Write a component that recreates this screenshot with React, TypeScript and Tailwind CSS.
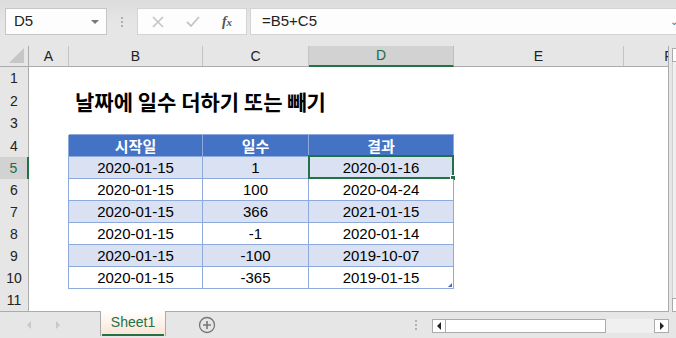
import React from 'react';

const font = { fontFamily: '"Liberation Sans", "Noto Sans CJK KR", sans-serif' };

const rows = [
  { start: '2020-01-15', days: '1', result: '2020-01-16' },
  { start: '2020-01-15', days: '100', result: '2020-04-24' },
  { start: '2020-01-15', days: '366', result: '2021-01-15' },
  { start: '2020-01-15', days: '-1', result: '2020-01-14' },
  { start: '2020-01-15', days: '-100', result: '2019-10-07' },
  { start: '2020-01-15', days: '-365', result: '2019-01-15' },
];

function Dots() {
  return (
    <div className="flex flex-col gap-[2px]">
      <span className="w-[2px] h-[2px] bg-[#b0b0b0]" />
      <span className="w-[2px] h-[2px] bg-[#b0b0b0]" />
      <span className="w-[2px] h-[2px] bg-[#b0b0b0]" />
    </div>
  );
}

function FormulaBar() {
  return (
    <div className="h-[46px] flex items-start pt-[8px] bg-gradient-to-b from-[#dcdcdc] via-[#e6e6e6] to-[#e6e6e6]">
      <div className="ml-[5px] w-[102px] h-[27px] bg-[#fdfdfd] border border-[#c6c6c6] flex items-center pl-[8px] pr-[7px]">
        <span className="text-[15px] text-[#222] flex-1">D5</span>
        <span className="w-0 h-0 border-l-[4px] border-r-[4px] border-t-[4px] border-l-transparent border-r-transparent border-t-[#777]" />
      </div>
      <div className="w-[30px] h-[27px] flex items-center justify-center">
        <Dots />
      </div>
      <div className="w-[110px] h-[27px] bg-[#fdfdfd] border border-[#d4d4d4] flex items-center">
        <div className="w-[40px] flex justify-center">
          <svg width="12" height="12" viewBox="0 0 12 12">
            <path d="M1 1L11 11M11 1L1 11" stroke="#c4c4c4" strokeWidth="1.6" />
          </svg>
        </div>
        <div className="w-[30px] flex justify-center">
          <svg width="14" height="12" viewBox="0 0 14 12">
            <path d="M1 6L5 10L13 1" stroke="#c4c4c4" strokeWidth="1.8" fill="none" />
          </svg>
        </div>
        <div className="flex-1 flex justify-center">
          <span className="text-[14px] italic font-bold text-[#555]" style={{ fontFamily: '"Liberation Serif", serif' }}>
            f<span className="text-[11px]">x</span>
          </span>
        </div>
      </div>
      <div className="ml-[3px] flex-1 h-[27px] bg-[#fdfdfd] border-y border-l border-[#d4d4d4] flex items-center pl-[11px]">
        <span className="text-[15px] text-[#222] flex-1">=B5+C5</span>
        <span className="text-[10px] text-[#666] -mr-[2px]">⌄</span>
      </div>
    </div>
  );
}

const cols = [
  { l: 'A', w: 'w-[40px]' },
  { l: 'B', w: 'w-[134px]' },
  { l: 'C', w: 'w-[106px]' },
  { l: 'D', w: 'w-[145px]' },
  { l: 'E', w: 'w-[170px]' },
  { l: 'F', w: 'w-[90px]' },
];

function ColumnHeader() {
  return (
    <div className="flex h-[21px] shrink-0 bg-[#e6e6e6] border-b border-[#ababab]">
      <div className="w-[29px] shrink-0 border-r border-[#ababab] flex items-end justify-end pr-[4px] pb-[3px]">
        <svg width="15" height="15" viewBox="0 0 15 15">
          <path d="M15 0L15 15L0 15Z" fill="#c6c6c6" />
        </svg>
      </div>
      {cols.map((c) =>
        c.l === 'D' ? (
          <div key={c.l} className={`${c.w} shrink-0 bg-[#d2d2d2] border-r border-[#bdbdbd] border-b-2 border-b-[#217346] -mb-px flex items-center justify-center text-[14px] text-[#1e6b41]`}>
            {c.l}
          </div>
        ) : (
          <div key={c.l} className={`${c.w} shrink-0 border-r border-[#c4c4c4] flex items-center justify-center text-[14px] text-[#222]`}>
            {c.l}
          </div>
        )
      )}
    </div>
  );
}

function RowHead({ n, active }: { n: number; active?: boolean }) {
  return active ? (
    <div className="w-[29px] shrink-0 bg-[#d2d2d2] border-r-2 border-[#217346] flex items-center justify-center text-[14px] text-[#1e6b41]">
      {n}
    </div>
  ) : (
    <div className="w-[29px] shrink-0 bg-[#e6e6e6] border-r border-[#ababab] flex items-center justify-center text-[14px] text-[#222]">
      {n}
    </div>
  );
}

function Grid() {
  const tb = 'border-[#8ea9db]';
  return (
    <div className="flex-1 flex flex-col overflow-hidden border-r border-b border-[#ababab] bg-white">
      <ColumnHeader />
      {/* row 1 */}
      <div className="flex h-[23px]">
        <RowHead n={1} />
        <div className="flex-1" />
      </div>
      {/* row 2 */}
      <div className="flex h-[23px]">
        <RowHead n={2} />
        <div className="w-[40px] shrink-0" />
        <div className="flex-1 flex items-center pl-[6px] whitespace-nowrap">
          <span className="text-[21px] font-bold text-black leading-none" style={{ fontFamily: '"Noto Sans CJK KR", sans-serif' }}>
            날짜에 일수 더하기 또는 빼기
          </span>
        </div>
      </div>
      {/* row 3 */}
      <div className="flex h-[23px]">
        <RowHead n={3} />
        <div className="w-[40px] shrink-0" />
        <div className={`w-[134px] shrink-0 border-b ${tb}`} />
        <div className={`w-[106px] shrink-0 border-b ${tb}`} />
        <div className={`w-[145px] shrink-0 border-b ${tb}`} />
        <div className="flex-1" />
      </div>
      {/* row 4 header */}
      <div className="flex h-[22px]">
        <RowHead n={4} />
        <div className={`w-[40px] shrink-0 border-r ${tb}`} />
        {['시작일', '일수', '결과'].map((h, i) => (
          <div
            key={h}
            className={`${['w-[134px]', 'w-[106px]', 'w-[145px]'][i]} shrink-0 bg-[#4472c4] border-r border-b ${tb} flex items-center justify-center text-white text-[15px] font-bold`}
            style={{ fontFamily: '"Noto Sans CJK KR", sans-serif' }}
          >
            {h}
          </div>
        ))}
        <div className="flex-1" />
      </div>
      {rows.map((r, i) => {
        const band = i % 2 === 0 ? 'bg-[#d9e1f2]' : 'bg-white';
        const last = i === rows.length - 1;
        return (
          <div key={i} className="flex h-[22px]">
            <RowHead n={i + 5} active={i === 0} />
            <div className={`w-[40px] shrink-0 border-r ${tb}`} />
            <div className={`w-[134px] shrink-0 ${band} border-r border-b ${tb} flex items-center justify-center text-[15px] text-black`}>
              {r.start}
            </div>
            <div className={`w-[106px] shrink-0 ${band} border-r border-b ${tb} flex items-center justify-center text-[15px] text-black`}>
              {r.days}
            </div>
            <div className={`w-[145px] shrink-0 ${band} border-r border-b ${tb} flex items-center justify-center text-[15px] text-black relative`}>
              {r.result}
              {i === 0 && (
                <div className="absolute -top-[2px] -left-[1px] -right-[1px] -bottom-[1px] border-2 border-[#217346]">
                  <div className="absolute -right-[4px] -bottom-[4px] w-[6px] h-[6px] bg-[#217346] border border-white" />
                </div>
              )}
              {last && (
                <div className="absolute right-[1px] bottom-[1px] w-0 h-0 border-l-[4px] border-b-[4px] border-l-transparent border-b-[#4a6bc4]" />
              )}
            </div>
            <div className="flex-1" />
          </div>
        );
      })}
      {/* row 11 */}
      <div className="flex h-[22px]">
        <RowHead n={11} />
        <div className="flex-1" />
      </div>
      <div className="flex flex-1">
        <div className="w-[29px] shrink-0 bg-[#e6e6e6] border-r border-[#ababab]" />
      </div>
    </div>
  );
}

function VScroll() {
  return (
    <div className="w-[7px] shrink-0 flex flex-col bg-[#e6e6e6] pl-[3px] pt-[2px]">
      <div className="h-[14px] bg-white border-l border-t border-b border-[#ababab]" />
      <div className="flex-1 bg-[#f0f0f0] border-l border-[#d0d0d0]" />
      <div className="h-[14px] bg-white border-l border-t border-b border-[#ababab]" />
    </div>
  );
}

function TabBar() {
  return (
    <div className="h-[26px] flex bg-[#e6e6e6]">
      <div className="w-[100px] shrink-0 flex items-center">
        <span className="ml-[27px] w-0 h-0 border-t-[4px] border-b-[4px] border-r-[4px] border-t-transparent border-b-transparent border-r-[#c8c8c8]" />
        <span className="ml-[25px] w-0 h-0 border-t-[4px] border-b-[4px] border-l-[4px] border-t-transparent border-b-transparent border-l-[#c8c8c8]" />
      </div>
      <div className="w-[66px] shrink-0 -mt-px h-[25px] bg-gradient-to-b from-white to-[#fbe2d3] border-x border-[#ababab] flex flex-col">
        <div className="flex-1 flex items-center justify-center text-[14px] text-[#217346]">Sheet1</div>
        <div className="h-[2px] bg-[#217346] mx-px" />
      </div>
      <div className="w-[83px] shrink-0 flex items-center justify-center">
        <svg width="18" height="18" viewBox="0 0 18 18" className="-ml-[2px]">
          <circle cx="9" cy="9" r="7.5" fill="none" stroke="#777" strokeWidth="1.3" />
          <path d="M9 5V13M5 9H13" stroke="#777" strokeWidth="1.6" />
        </svg>
      </div>
      <div className="w-[183px] shrink-0 flex items-center justify-end pr-[15px]">
        <Dots />
      </div>
      <div className="flex-1 flex pt-[7px] pb-[5px] pr-[7px]">
        <div className="w-[14px] bg-white border border-[#ababab] flex items-center justify-center">
          <span className="w-0 h-0 border-t-[4px] border-b-[4px] border-r-[4px] border-t-transparent border-b-transparent border-r-[#222]" />
        </div>
        <div className="w-[160px] bg-white border-y border-r border-[#ababab]" />
        <div className="flex-1 bg-[#f0f0f0]" />
        <div className="w-[15px] bg-white border border-[#ababab] flex items-center justify-center">
          <span className="w-0 h-0 border-t-[4px] border-b-[4px] border-l-[4px] border-t-transparent border-b-transparent border-l-[#222]" />
        </div>
      </div>
    </div>
  );
}

export default function App() {
  return (
    <div className="w-[676px] h-[338px] bg-[#e6e6e6] flex flex-col overflow-hidden" style={font}>
      <FormulaBar />
      <div className="flex h-[266px]">
        <Grid />
        <VScroll />
      </div>
      <TabBar />
    </div>
  );
}
